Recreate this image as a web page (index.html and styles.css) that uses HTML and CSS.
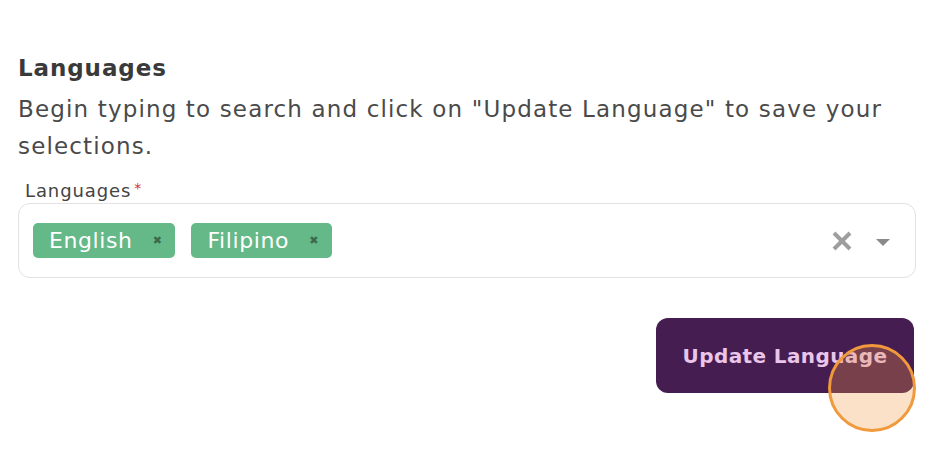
FILE: index.html
```html
<!DOCTYPE html>
<html>
<head>
<meta charset="utf-8">
<link rel="stylesheet" href="styles.css">
</head>
<body>
<main class="page">
  <section class="intro">
    <h2 class="title">Languages</h2>
    <p class="desc">Begin typing to search and click on "Update Language" to save your selections.</p>
  </section>
  <div class="field">
    <label class="label">Languages<span class="req">*</span></label>
    <div class="select">
      <div class="chips">
        <span class="chip">English<span class="chip-x">&#x2716;</span></span>
        <span class="chip">Filipino<span class="chip-x">&#x2716;</span></span>
      </div>
      <div class="controls">
        <svg class="clear" width="22" height="22" viewBox="0 0 22 22"><path d="M3 3 L19 19 M19 3 L3 19" stroke="#9e9e9e" stroke-width="4" fill="none"/></svg>
        <svg class="caret" width="16" height="8" viewBox="0 0 16 8"><path d="M1 1 L15 1 L8 8 Z" fill="#8a8a8a"/></svg>
      </div>
    </div>
  </div>
  <div class="actions">
    <button class="btn">Update Language</button>
    <span class="touch"></span>
  </div>
</main>
</body>
</html>
```
FILE: styles.css
```css
* { box-sizing: border-box; }
html, body { height: 100%; }
body {
  margin: 0;
  background: #fff;
  font-family: "DejaVu Sans", sans-serif;
  color: #444;
}
.page {
  min-height: 464px;
  padding: 51px 20px 0 18px;
}
.title {
  margin: 0;
  font-size: 23px;
  font-weight: bold;
  letter-spacing: 0.9px;
  color: #3a3a3a;
  line-height: 34px;
}
.desc {
  margin: 6px 0 0;
  font-size: 23px;
  letter-spacing: 1.15px;
  line-height: 37px;
  color: #4a4a4a;
  max-width: 890px;
}
.field {
  margin-top: 12px;
}
.label {
  display: block;
  font-size: 18px;
  letter-spacing: 0.9px;
  color: #444;
  padding-left: 7px;
  line-height: 22px;
  margin-bottom: 1px;
}
.req {
  color: #d0312d;
  font-size: 14px;
  vertical-align: 4px;
  margin-left: 3px;
}
.select {
  display: flex;
  align-items: center;
  justify-content: space-between;
  height: 75px;
  border: 1.5px solid #e2e2e2;
  border-radius: 12px;
  padding: 0 24px 0 14px;
}
.chips {
  display: flex;
  gap: 16px;
}
.chip {
  display: inline-flex;
  align-items: center;
  height: 35px;
  padding: 0 13px 0 16px;
  background: #65b887;
  color: #fff;
  font-size: 22px;
  letter-spacing: 0.6px;
  border-radius: 5px;
}
.chip-x {
  font-size: 11px;
  color: #3a6a4c;
  margin-left: 20px;
}
.controls {
  display: flex;
  align-items: center;
  gap: 20px;
}
.clear { margin-right: 2px; }
.caret { margin-top: 2px; }
.actions {
  position: relative;
  display: flex;
  justify-content: flex-end;
  margin-top: 40px;
  padding-right: 2px;
}
.btn {
  width: 258px;
  height: 75px;
  border: none;
  border-radius: 12px;
  background: #461d50;
  color: #e9c6ea;
  font-family: "DejaVu Sans", sans-serif;
  font-weight: bold;
  font-size: 20px;
  letter-spacing: 0.4px;
}
.touch {
  position: absolute;
  right: 0;
  top: 26px;
  width: 88px;
  height: 88px;
  border-radius: 50%;
  border: 3px solid #f0993d;
  background: rgba(240, 153, 61, 0.29);
}
```
